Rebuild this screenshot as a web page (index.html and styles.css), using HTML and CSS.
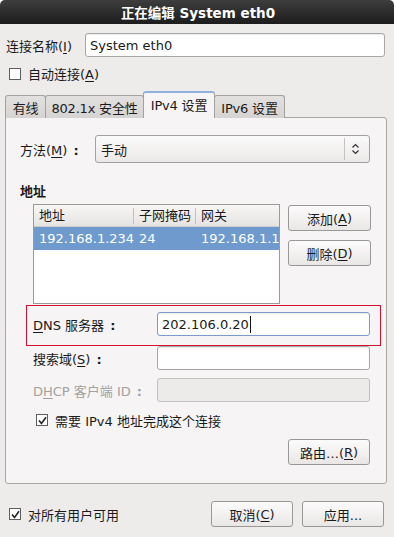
FILE: index.html
```html
<!DOCTYPE html>
<html lang="zh">
<head>
<meta charset="utf-8">
<title>正在编辑 System eth0</title>
<link rel="stylesheet" href="styles.css">
</head>
<body>
<div class="dialog">
  <div class="titlebar">正在编辑 System eth0</div>

  <div class="name-row">
    <span class="name-label">连接名称(<u>I</u>)</span>
    <div class="entry name-entry">System eth0</div>
  </div>

  <div class="check-row top-check">
    <span class="checkbox"></span>
    <span>自动连接(<u>A</u>)</span>
  </div>

  <div class="notebook">
    <div class="tabs">
      <div class="tab t1">有线</div>
      <div class="tab t2">802.1x 安全性</div>
      <div class="tab t3 active">IPv4 设置</div>
      <div class="tab t4">IPv6 设置</div>
    </div>
    <div class="page">
      <div class="method-row">
        <span class="method-label">方法(<u>M</u>)<span class="colon">:</span></span>
        <div class="combo">
          <span class="combo-text">手动</span>
          <span class="combo-sep"></span>
          <svg class="combo-arrows" width="9" height="12" viewBox="0 0 9 12">
            <path d="M1.5 4.5 L4.5 1.5 L7.5 4.5 M1.5 7.5 L4.5 10.5 L7.5 7.5" fill="none" stroke="#333" stroke-width="1.2"/>
          </svg>
        </div>
      </div>

      <div class="section-title">地址</div>

      <div class="addr-row">
        <div class="table">
          <div class="thead">
            <span class="col c1">地址</span>
            <span class="col c2">子网掩码</span>
            <span class="col c3">网关</span>
          </div>
          <div class="trow selected">
            <span class="col c1">192.168.1.234</span>
            <span class="col c2">24</span>
            <span class="col c3">192.168.1.1</span>
          </div>
        </div>
        <div class="side-buttons">
          <div class="button">添加(<u>A</u>)</div>
          <div class="button">删除(<u>D</u>)</div>
        </div>
      </div>

      <div class="highlight">
        <div class="form-row">
          <span class="form-label"><u>D</u>NS 服务器<span class="colon">:</span></span>
          <div class="entry focused">202.106.0.20<span class="caret"></span></div>
        </div>
      </div>

      <div class="form-row plain">
        <span class="form-label">搜索域(<u>S</u>)<span class="colon">:</span></span>
        <div class="entry"></div>
      </div>

      <div class="form-row plain dhcp">
        <span class="form-label disabled">D<u>H</u>CP 客户端 ID<span class="colon">:</span></span>
        <div class="entry insensitive"></div>
      </div>

      <div class="check-row ipv4-check">
        <span class="checkbox checked">
          <svg width="9" height="9" viewBox="0 0 9 9"><path d="M1 4.5 L3.5 7.5 L8 1.2" fill="none" stroke="#222" stroke-width="1.6"/></svg>
        </span>
        <span>需要 IPv4 地址完成这个连接</span>
      </div>

      <div class="route-row">
        <div class="button route">路由…(<u>R</u>)</div>
      </div>
    </div>
  </div>

  <div class="bottom-row">
    <div class="check-row bottom-check">
      <span class="checkbox checked">
        <svg width="9" height="9" viewBox="0 0 9 9"><path d="M1 4.5 L3.5 7.5 L8 1.2" fill="none" stroke="#222" stroke-width="1.6"/></svg>
      </span>
      <span>对所有用户可用</span>
    </div>
    <div class="bottom-buttons">
      <div class="button wide">取消(<u>C</u>)</div>
      <div class="button wide">应用...</div>
    </div>
  </div>
</div>
</body>
</html>
```

FILE: styles.css
```css
html {
  background: #ffffff;
}
body {
  margin: 0;
  width: 394px;
  height: 537px;
  overflow: hidden;
  font-family: "DejaVu Sans", "Noto Sans CJK SC", sans-serif;
  font-size: 13px;
  color: #1a1a1a;
}
u {
  text-decoration: underline;
  text-underline-offset: 2px;
}
.colon {
  font-weight: bold;
  padding-left: 6px;
}
.dialog {
  width: 394px;
  height: 537px;
  background: #edeceb;
  display: flex;
  flex-direction: column;
  border-radius: 5px 5px 0 0;
  overflow: hidden;
}
.titlebar {
  height: 24px;
  flex: none;
  background: linear-gradient(#3e3e3e, #1c1c1c);
  color: #ffffff;
  font-weight: bold;
  font-size: 13.5px;
  display: flex;
  align-items: center;
  justify-content: center;
  padding-left: 2px;
}

/* entries */
.entry {
  box-sizing: border-box;
  height: 24px;
  background: #ffffff;
  border: 1px solid #a9a7a6;
  border-radius: 3px;
  box-shadow: inset 0 1px 1px rgba(0,0,0,0.08);
  display: flex;
  align-items: center;
  padding-left: 4px;
  white-space: nowrap;
}
.entry.focused {
  border-color: #7b9cc9;
}
.entry.insensitive {
  background: #ecebea;
  border-color: #c2c0bf;
  box-shadow: none;
}
.caret {
  display: inline-block;
  width: 1px;
  height: 17px;
  background: #111;
  margin-left: 1px;
}

.name-row {
  margin-top: 9px;
  display: flex;
  align-items: center;
  height: 24px;
}
.name-label {
  width: 79px;
  padding-left: 6px;
}
.name-entry {
  width: 300px;
}

/* checkboxes */
.check-row {
  display: flex;
  align-items: center;
}
.checkbox {
  box-sizing: border-box;
  width: 12px;
  height: 12px;
  border: 1px solid #5e5e5e;
  background: #ffffff;
  display: flex;
  align-items: center;
  justify-content: center;
  margin-right: 7px;
  flex: none;
}
.top-check {
  height: 23px;
  margin-top: 5px;
  padding-left: 9px;
}

/* notebook */
.notebook {
  margin-top: 7px;
  margin-left: 5px;
  width: 382px;
}
.tabs {
  display: flex;
  align-items: flex-end;
  height: 26px;
  position: relative;
  z-index: 1;
  margin-bottom: -1px;
}
.tab {
  box-sizing: border-box;
  height: 23px;
  display: flex;
  align-items: center;
  justify-content: center;
  background: linear-gradient(#e3e1e0, #d6d4d3);
  border: 1px solid #a3a1a0;
  border-bottom: none;
  border-radius: 3px 3px 0 0;
  margin-right: -1px;
  white-space: nowrap;
  letter-spacing: -0.2px;
}
.t1 { width: 41px; }
.t2 { width: 99px; }
.t3 { width: 72px; }
.t4 { width: 71px; }
.tab.active {
  height: 27px;
  background: #f6f4f4;
  border-color: #a3a1a0;
  border-top: 2px solid #8fb0de;
  padding-bottom: 2px;
  z-index: 2;
}
.page {
  box-sizing: border-box;
  height: 367px;
  background: #f6f4f4;
  border: 1px solid #a8a6a5;
  border-radius: 0 3px 3px 3px;
  display: flex;
  flex-direction: column;
}

.method-row {
  margin-top: 17px;
  display: flex;
  align-items: center;
  height: 28px;
}
.method-label {
  width: 75px;
  padding-left: 14px;
}
.combo {
  box-sizing: border-box;
  width: 275px;
  height: 28px;
  border: 1px solid #a3a1a0;
  border-radius: 3px;
  background: linear-gradient(#fbfafa, #ebe9e8);
  display: flex;
  align-items: center;
}
.combo-text {
  flex: 1;
  padding-left: 5px;
}
.combo-sep {
  width: 1px;
  height: 22px;
  background: #c4c2c1;
  margin-right: 6px;
}
.combo-arrows {
  margin-right: 9px;
}

.section-title {
  margin-top: 21px;
  padding-left: 14px;
  font-weight: bold;
  line-height: 16px;
}

.addr-row {
  margin-top: 4px;
  display: flex;
  padding-left: 27px;
  gap: 8px;
}
.table {
  box-sizing: border-box;
  width: 247px;
  height: 100px;
  background: #ffffff;
  border: 1px solid #9c9a99;
  overflow: hidden;
}
.thead, .trow {
  display: flex;
  white-space: nowrap;
}
.thead {
  height: 21px;
  align-items: center;
  background: linear-gradient(#f7f6f5, #e6e4e3);
  border-bottom: 1px solid #cfcdcc;
}
.trow {
  height: 23px;
  align-items: center;
}
.trow.selected {
  background: #6f9ace;
  color: #ffffff;
}
.col {
  box-sizing: border-box;
  padding-left: 5px;
  overflow: hidden;
}
.c1 { width: 100px; }
.c2 { width: 62px; }
.c3 { flex: 1; }
.thead .c1, .thead .c2 {
  border-right: 1px solid #c2c0bf;
  height: 16px;
  line-height: 16px;
}
.thead .col {
  line-height: 16px;
}

.side-buttons {
  display: flex;
  flex-direction: column;
  gap: 9px;
  padding-top: 1px;
}
.button {
  box-sizing: border-box;
  width: 83px;
  height: 26px;
  border: 1px solid #9a9897;
  border-radius: 3px;
  background: linear-gradient(#fcfbfb, #e9e7e6);
  display: flex;
  align-items: center;
  justify-content: center;
  white-space: nowrap;
}

.highlight {
  box-sizing: border-box;
  margin-top: 1px;
  margin-left: 20px;
  width: 355px;
  height: 41px;
  border: 1px solid #d4122e;
  padding: 6px 0 0 6px;
}
.form-row {
  display: grid;
  grid-template-columns: 124px 213px;
  align-items: center;
}
.form-row.plain {
  margin-left: 27px;
}
.dhcp {
  margin-top: 8px;
}
.form-label.disabled {
  color: #a3a1a0;
}

.ipv4-check {
  margin-top: 11px;
  padding-left: 30px;
  height: 14px;
}

.route-row {
  margin-top: 12px;
  display: flex;
  padding-left: 282px;
}
.button.route {
  width: 82px;
}

.bottom-row {
  margin-top: 17px;
  display: flex;
  align-items: center;
  justify-content: space-between;
  height: 26px;
}
.bottom-check {
  padding-left: 9px;
}
.bottom-buttons {
  display: flex;
  gap: 9px;
  padding-right: 10px;
}
.button.wide {
  width: 82px;
}
```
